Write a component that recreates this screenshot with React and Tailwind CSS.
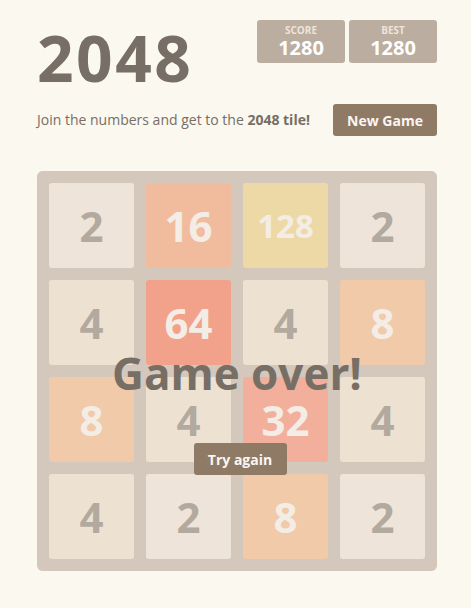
const BOARD = [
  [2, 16, 128, 2],
  [4, 64, 4, 8],
  [8, 4, 32, 4],
  [4, 2, 8, 2],
];

const TILE_STYLE = {
  2: 'bg-[#eee4da] text-[#776e65]',
  4: 'bg-[#ede0c8] text-[#776e65]',
  8: 'bg-[#f2b179] text-[#f9f6f2]',
  16: 'bg-[#f59563] text-[#f9f6f2]',
  32: 'bg-[#f67c5f] text-[#f9f6f2]',
  64: 'bg-[#f65e3b] text-[#f9f6f2]',
  128: 'bg-[#edcf72] text-[#f9f6f2]',
};

function ScoreBox({ label, value }) {
  return (
    <div className="w-[88px] h-[43px] rounded-[3px] bg-[#bbada0] flex flex-col items-center justify-center">
      <span className="text-[10px] leading-none uppercase font-bold text-[#eee4da]">{label}</span>
      <span className="text-[20px] leading-none font-bold text-white mt-[3px]">{value}</span>
    </div>
  );
}

function Tile({ value }) {
  const size = value >= 100 ? 'text-[33px]' : 'text-[42px]';
  return (
    <div className={`rounded-[3px] flex items-center justify-center font-bold leading-none ${TILE_STYLE[value]} ${size}`}>
      {value}
    </div>
  );
}

export default function App() {
  return (
    <div className="min-h-[608px] bg-[#faf8ef] text-[#776e65]" style={{ fontFamily: '"Open Sans", "Noto Sans", sans-serif' }}>
      <div className="w-[400px] ml-[37px] pt-[20px]">
        <div className="flex justify-between items-start">
          <h1 className="text-[64px] leading-none font-bold tracking-[2.5px] mt-[6px]">2048</h1>
          <div className="flex gap-[4px]">
            <ScoreBox label="Score" value={1280} />
            <ScoreBox label="Best" value={1280} />
          </div>
        </div>

        <div className="flex justify-between items-center mt-[14px]">
          <p className="text-[14px] leading-[20px]">
            Join the numbers and get to the <strong className="font-bold">2048 tile!</strong>
          </p>
          <button className="w-[104px] h-[32px] rounded-[3px] bg-[#8f7a66] text-[#f9f6f2] text-[14px] font-bold">
            New Game
          </button>
        </div>

        <div className="relative mt-[35px] w-[400px] h-[400px] rounded-[6px] bg-[#bbada0] p-[12px] grid grid-cols-4 grid-rows-4 gap-[12px]">
          {BOARD.flat().map((v, i) => (
            <Tile key={i} value={v} />
          ))}

          {/* game over overlay */}
          <div className="absolute inset-0 rounded-[6px] bg-[rgba(238,228,218,0.5)] flex flex-col items-center">
            <p className="mt-[180px] text-[44px] leading-none font-bold text-[#776e65]">Game over!</p>
            <button className="mt-[48px] ml-[6px] w-[93px] h-[32px] rounded-[3px] bg-[#8f7a66] text-[#f9f6f2] text-[14px] font-bold">
              Try again
            </button>
          </div>
        </div>
      </div>
    </div>
  );
}
